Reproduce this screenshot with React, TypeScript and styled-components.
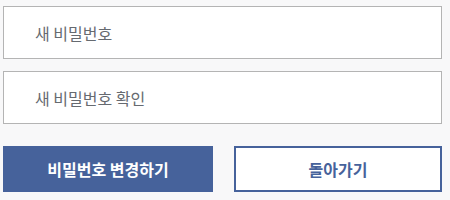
import React from "react";
import styled, { createGlobalStyle } from "styled-components";

const GlobalStyle = createGlobalStyle`
  html, body {
    margin: 0;
    padding: 0;
    background: #f8f8f9;
    font-family: "Noto Sans CJK KR", "Noto Sans", sans-serif;
  }
`;

const Form = styled.form`
  width: 439px;
  padding: 6px 0 0 3px;
  display: flex;
  flex-direction: column;
  gap: 12px;
`;

const Input = styled.input`
  box-sizing: border-box;
  width: 100%;
  height: 53px;
  padding: 0 31px;
  border: 1px solid #b4b4b4;
  background: #fff;
  font-family: inherit;
  font-size: 16px;
  color: #333;
  outline: none;

  &::placeholder {
    color: #666a70;
  }
`;

const Actions = styled.div`
  margin-top: 10px;
  display: grid;
  grid-template-columns: 210px 208px;
  justify-content: space-between;
`;

const Button = styled.button<{ $primary?: boolean }>`
  box-sizing: border-box;
  height: 46px;
  border: 2px solid #46629b;
  background: ${(p) => (p.$primary ? "#46629b" : "#fff")};
  color: ${(p) => (p.$primary ? "#fff" : "#46629b")};
  font-family: inherit;
  font-size: 16px;
  font-weight: 700;
  cursor: pointer;
`;

export default function App() {
  return (
    <>
      <GlobalStyle />
      <Form onSubmit={(e) => e.preventDefault()}>
        <Input type="password" placeholder="새 비밀번호" />
        <Input type="password" placeholder="새 비밀번호 확인" />
        <Actions>
          <Button $primary type="submit">
            비밀번호 변경하기
          </Button>
          <Button type="button">돌아가기</Button>
        </Actions>
      </Form>
    </>
  );
}
